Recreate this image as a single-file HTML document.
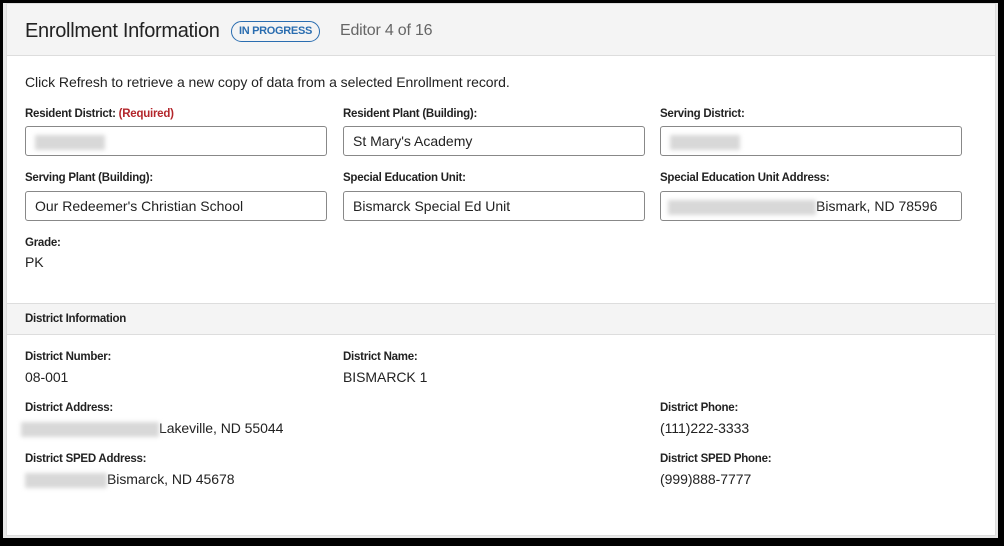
<!DOCTYPE html>
<html><head><style>
*{margin:0;padding:0;box-sizing:border-box}
body{width:1007px;height:549px;background:#fff;font-family:"Liberation Sans",Arial,sans-serif;color:#222;position:relative;overflow:hidden}
.frame{position:absolute;left:0;top:0;width:1004px;height:546px;border:3px solid #000;border-right-width:6px;border-bottom-width:8px;background:#e8e8e8}
.panel{position:absolute;left:6px;top:3px;width:990px;height:533px;background:#fff;border:1px solid #ddd}
.hdr{position:absolute;left:0;top:0;width:988px;height:52px;background:#f4f4f4;border-bottom:1px solid #ddd}
.t{position:absolute;font-size:20px;left:18px;top:16px;color:#222;letter-spacing:-0.3px}
.badge{position:absolute;left:224px;top:17px;height:21px;width:89px;border:1.5px solid #2a6db0;border-radius:11px;color:#2a6db0;font-size:11px;font-weight:bold;text-align:center;line-height:18px;letter-spacing:-0.3px}
.ed{position:absolute;left:333px;top:18px;font-size:16px;color:#666;letter-spacing:-0.2px}
.a{position:absolute;font-size:14px;letter-spacing:-0.05px}
.l{position:absolute;font-size:11.5px;font-weight:bold;color:#222;letter-spacing:-0.25px;margin-top:2px}
.req{color:#b3262b}
.in{position:absolute;height:30px;width:302px;border:1px solid #888;border-radius:3px;font-size:14px;padding:6px 9px}
.blur{display:inline-block;background:#d8d8d8;filter:blur(2px);height:15px;vertical-align:middle}
.bar{position:absolute;left:0;top:299px;width:988px;height:32px;background:#f4f4f4;border-top:1px solid #ddd;border-bottom:1px solid #ddd}
</style></head><body>
<div class="frame"></div>
<div class="panel">
<div class="hdr"><div class="t">Enrollment Information</div><div class="badge">IN PROGRESS</div><div class="ed">Editor 4 of 16</div></div>
<div class="a" style="left:18px;top:70px">Click Refresh to retrieve a new copy of data from a selected Enrollment record.</div>
<div class="l" style="left:18px;top:102px">Resident District: <span class="req">(Required)</span></div>
<div class="l" style="left:336px;top:102px">Resident Plant (Building):</div>
<div class="l" style="left:653px;top:102px">Serving District:</div>
<div class="in" style="left:18px;top:122px"><span class="blur" style="width:70px"></span></div>
<div class="in" style="left:336px;top:122px">St Mary's Academy</div>
<div class="in" style="left:653px;top:122px"><span class="blur" style="width:70px"></span></div>
<div class="l" style="left:18px;top:166px">Serving Plant (Building):</div>
<div class="l" style="left:336px;top:166px">Special Education Unit:</div>
<div class="l" style="left:653px;top:166px">Special Education Unit Address:</div>
<div class="in" style="left:18px;top:187px">Our Redeemer's Christian School</div>
<div class="in" style="left:336px;top:187px">Bismarck Special Ed Unit</div>
<div class="in" style="left:653px;top:187px;padding-left:7px"><span class="blur" style="width:148px"></span>Bismark, ND 78596</div>
<div class="l" style="left:18px;top:231px">Grade:</div>
<div class="a" style="left:18px;top:250px">PK</div>
<div class="bar"><div class="l" style="left:18px;top:7px">District Information</div></div>
<div class="l" style="left:18px;top:345px">District Number:</div>
<div class="a" style="left:18px;top:365px">08-001</div>
<div class="l" style="left:336px;top:345px">District Name:</div>
<div class="a" style="left:336px;top:365px">BISMARCK 1</div>
<div class="l" style="left:18px;top:396px">District Address:</div>
<div class="a" style="left:14px;top:416px"><span class="blur" style="width:138px"></span>Lakeville, ND 55044</div>
<div class="l" style="left:653px;top:396px">District Phone:</div>
<div class="a" style="left:653px;top:416px">(111)222-3333</div>
<div class="l" style="left:18px;top:447px">District SPED Address:</div>
<div class="a" style="left:18px;top:467px"><span class="blur" style="width:82px"></span>Bismarck, ND 45678</div>
<div class="l" style="left:653px;top:447px">District SPED Phone:</div>
<div class="a" style="left:653px;top:467px">(999)888-7777</div>
</div>
</body></html>
